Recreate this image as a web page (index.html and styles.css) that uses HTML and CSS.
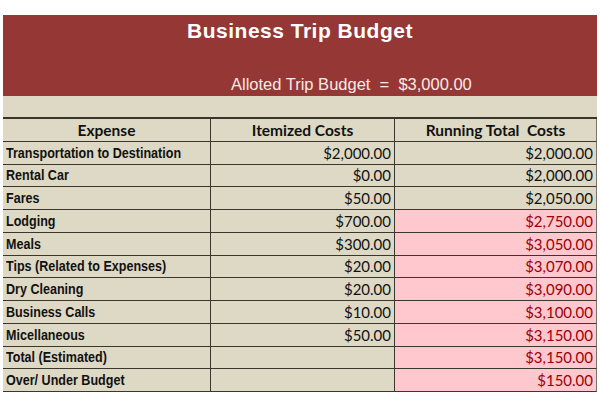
FILE: index.html
```html
<!DOCTYPE html>
<html>
<head>
<meta charset="utf-8">
<link rel="stylesheet" href="styles.css">
</head>
<body>
<div class="sheet">
  <div class="banner">
    <div class="title">Business Trip Budget</div>
    <div class="allot">Alloted Trip Budget&nbsp; =&nbsp; $3,000.00</div>
  </div>
  <div class="band"></div>
  <div class="grid">
    <div class="cell head">Expense</div>
    <div class="cell head">Itemized Costs</div>
    <div class="cell head last">Running Total&nbsp; Costs</div>

    <div class="cell name"><span>Transportation to Destination</span></div>
    <div class="cell num">$2,000.00</div>
    <div class="cell num last">$2,000.00</div>

    <div class="cell name"><span>Rental Car</span></div>
    <div class="cell num">$0.00</div>
    <div class="cell num last">$2,000.00</div>

    <div class="cell name"><span>Fares</span></div>
    <div class="cell num">$50.00</div>
    <div class="cell num last">$2,050.00</div>

    <div class="cell name"><span>Lodging</span></div>
    <div class="cell num">$700.00</div>
    <div class="cell num last warn">$2,750.00</div>

    <div class="cell name"><span>Meals</span></div>
    <div class="cell num">$300.00</div>
    <div class="cell num last warn">$3,050.00</div>

    <div class="cell name"><span>Tips (Related to Expenses)</span></div>
    <div class="cell num">$20.00</div>
    <div class="cell num last warn">$3,070.00</div>

    <div class="cell name"><span>Dry Cleaning</span></div>
    <div class="cell num">$20.00</div>
    <div class="cell num last warn">$3,090.00</div>

    <div class="cell name"><span>Business Calls</span></div>
    <div class="cell num">$10.00</div>
    <div class="cell num last warn">$3,100.00</div>

    <div class="cell name"><span>Micellaneous</span></div>
    <div class="cell num">$50.00</div>
    <div class="cell num last warn">$3,150.00</div>

    <div class="cell name"><span>Total (Estimated)</span></div>
    <div class="cell num"></div>
    <div class="cell num last warn">$3,150.00</div>

    <div class="cell name"><span>Over/ Under Budget</span></div>
    <div class="cell num"></div>
    <div class="cell num last warn">$150.00</div>
  </div>
</div>
</body>
</html>
```

FILE: styles.css
```css
html, body {
  margin: 0;
  padding: 0;
  background: #ffffff;
}

.sheet {
  padding: 15px 3px 0 3px;
  width: 594px;
}

.banner {
  background: #953735;
  height: 81px;
  display: flex;
  flex-direction: column;
}

.title {
  color: #ffffff;
  font-family: "Liberation Sans", Arial, sans-serif;
  font-weight: 700;
  font-size: 21px;
  letter-spacing: 0.5px;
  text-align: center;
  padding-top: 4px;
  line-height: 24px;
}

.allot {
  margin-top: auto;
  padding-left: 228px;
  padding-bottom: 2px;
  color: #fbe9e6;
  font-family: "Liberation Sans", Arial, sans-serif;
  font-size: 16.5px;
  line-height: 19px;
}

.band {
  background: #ddd9c4;
  height: 21px;
}

.grid {
  display: grid;
  grid-template-columns: 208px 184px 202px;
  grid-auto-rows: 22.75px;
  background: #ddd9c4;
  border-top: 2px solid #38362c;
  box-sizing: border-box;
}

.cell {
  box-sizing: border-box;
  border-bottom: 1.5px solid #3a382e;
  border-right: 1.5px solid #3a382e;
  display: flex;
  align-items: center;
  color: #111111;
  white-space: nowrap;
  overflow: hidden;
}

.cell.last {
  border-right: 1px solid #77756a;
}

.head {
  justify-content: center;
  font-family: Lato, "Open Sans", sans-serif;
  font-weight: 700;
  font-size: 15.5px;
}

.name {
  padding-left: 3px;
  font-family: "Liberation Sans", Arial, sans-serif;
  font-weight: 700;
  font-size: 15.5px;
}

.name span {
  display: inline-block;
  transform: scaleX(0.81);
  transform-origin: left center;
}

.num {
  justify-content: flex-end;
  padding-right: 3px;
  font-family: Lato, "Open Sans", sans-serif;
  font-size: 15px;
}

.warn {
  background: #ffc7ce;
  color: #9c0006;
}
```
